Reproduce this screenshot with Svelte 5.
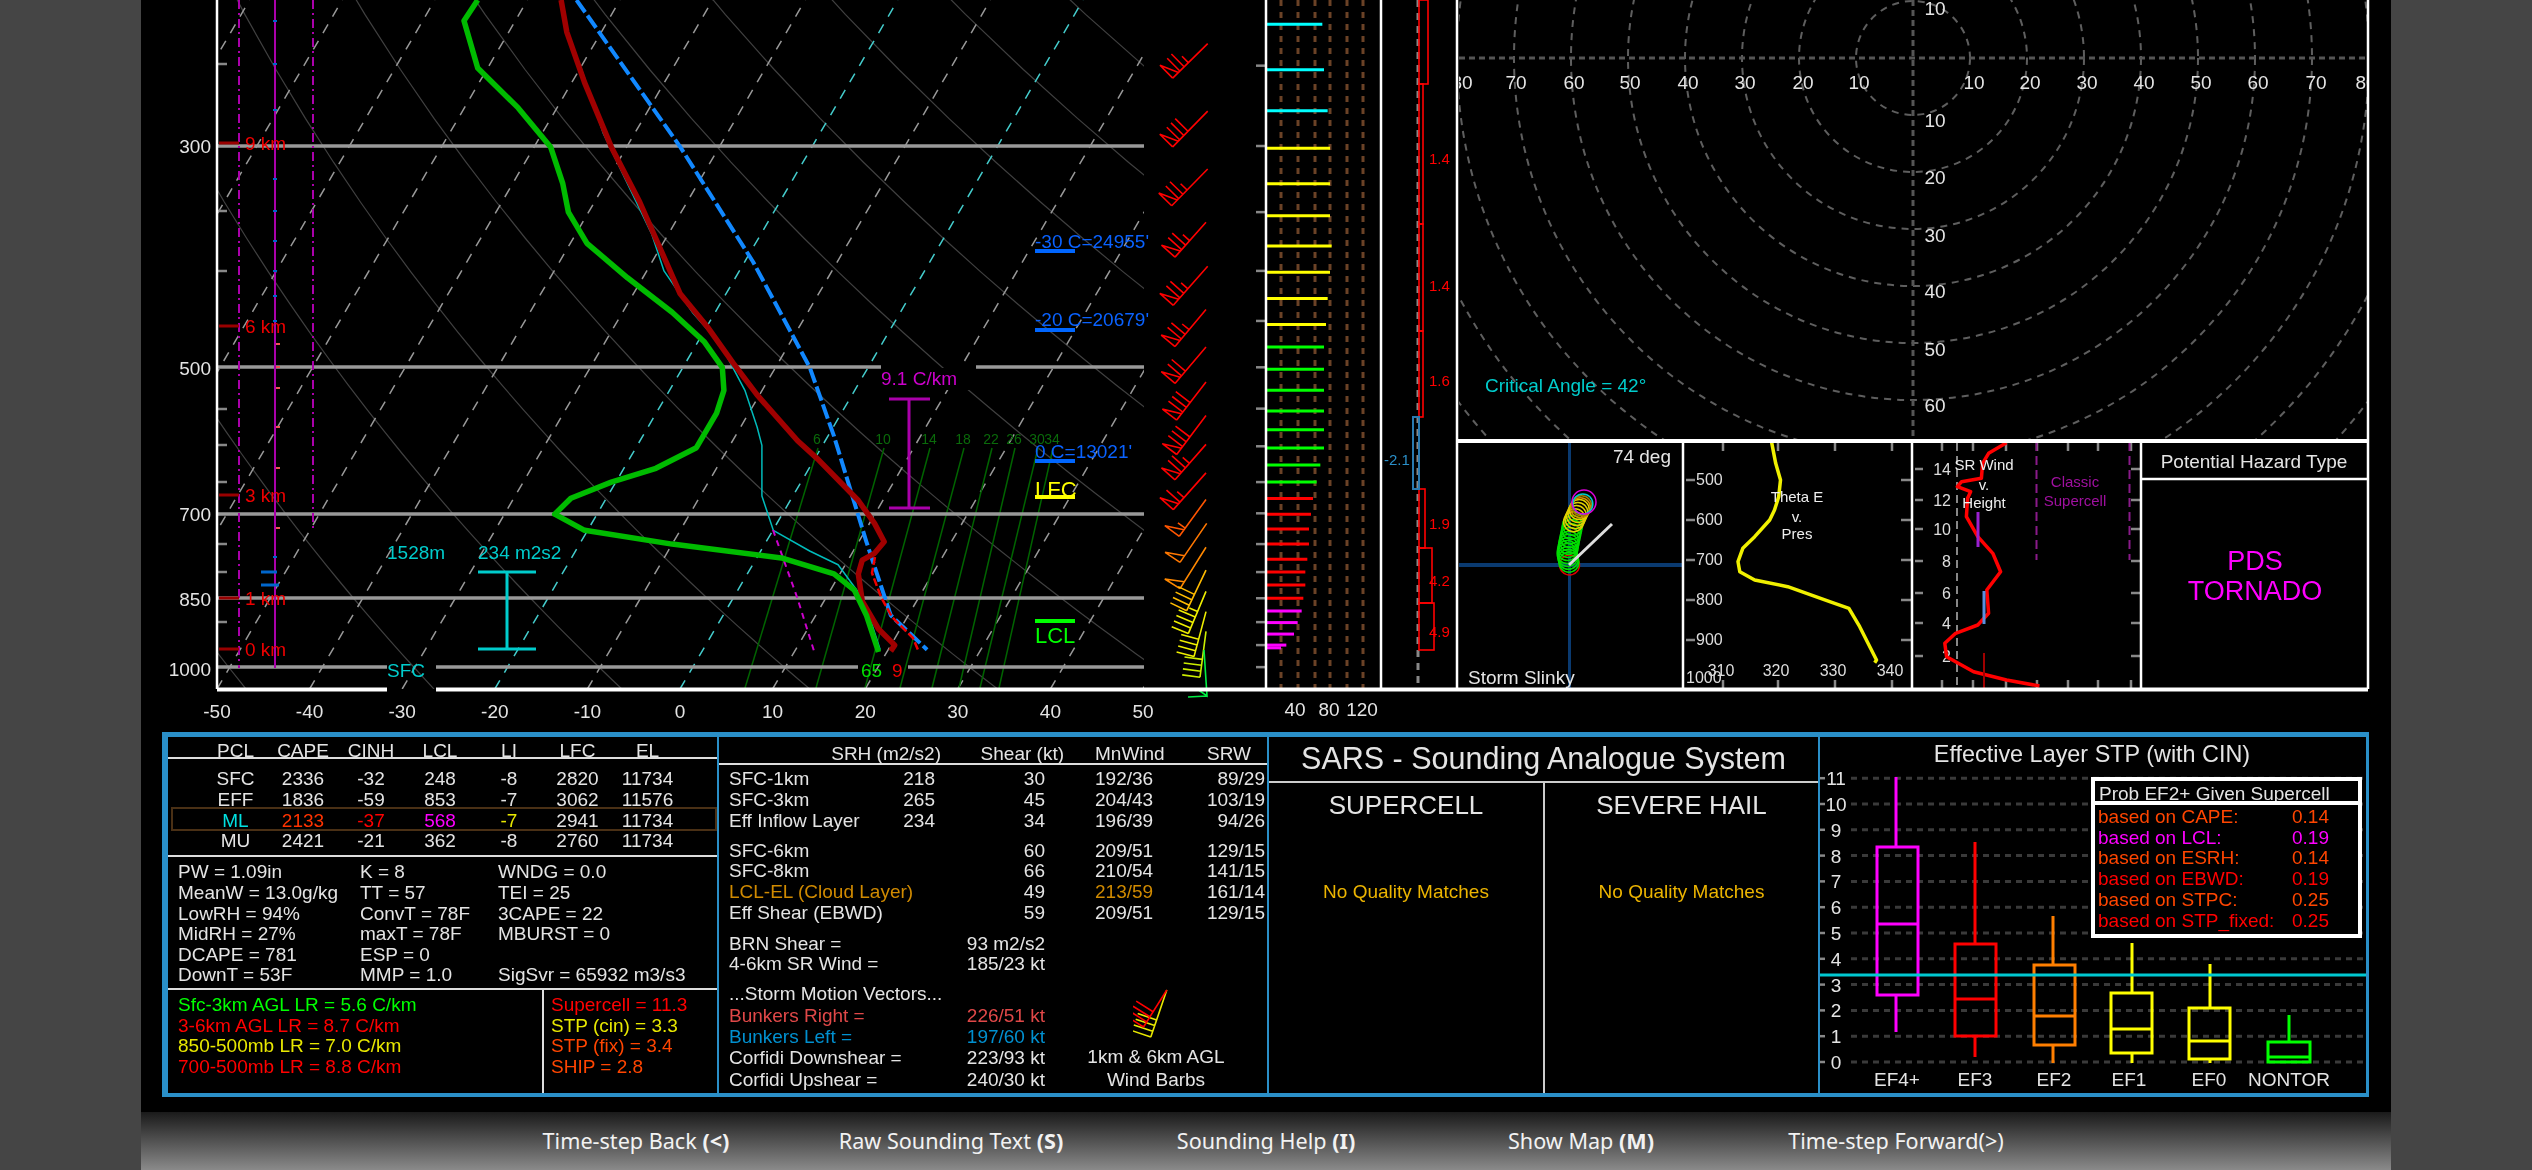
<script>
	// Traced points were read from crops of the sounding, so each crop gets its own scale
	const z1 = (x, y) => [x / 1.235, y / 2.178];
	const z7 = (x, y) => [1440 + x / 1.668, 430 + y / 3];
	const z9 = (x, y) => [1130 + x / 3, y / 2.178];
	const line = (pts, map) => pts.map(([x, y]) => map(x, y).map((v) => v.toFixed(1)).join(',')).join(' ');

	const yP = (p) => 667 - 431 * Math.log(1000 / p);
	const xT = (t, y) => 217 + (t + 50) * 9.26 + (689 - y) * 0.585;

	const isotherms = [];
	for (let t = -170; t <= 50; t += 10) isotherms.push({ t, x1: xT(t, 689), x2: xT(t, 0) });

	const adiabats = [];
	for (let theta = 203; theta <= 463; theta += 20) {
		const pts = [];
		for (let p = 1060; p >= 150; p -= 30) {
			const y = yP(p);
			pts.push(`${xT(theta * Math.pow(p / 1000, 0.286) - 273.15, y).toFixed(1)},${y.toFixed(1)}`);
		}
		adiabats.push(pts.join(' '));
	}

	const mixing = [
		[745, 818, '6'], [816, 884, '10'], [865, 930, '14'], [900, 964, '18'],
		[932, 992, '22'], [959, 1015, '26'], [980, 1038, '30'], [999, 1053, '34']
	];

	const temp = line([[693,0],[700,70],[722,180],[755,320],[790,440],[815,540],[840,640],[875,715],[905,790],[935,860],[985,960],[1010,1000],[1060,1090],[1080,1140],[1092,1180],[1080,1205],[1065,1220],[1060,1250],[1065,1310],[1085,1370],[1105,1405],[1100,1418]], z1);
	const dew = line([[590,0],[573,45],[590,148],[640,235],[680,320],[695,400],[702,462],[725,530],[775,605],[830,680],[870,745],[892,800],[894,850],[885,900],[860,975],[810,1020],[755,1050],[705,1085],[685,1120],[722,1155],[830,1185],[965,1215],[1030,1250],[1055,1285],[1070,1340],[1085,1420]], z1);
	const wetbulb = line([[693,0],[700,70],[718,150],[745,290],[775,400],[805,510],[820,590],[855,680],[890,750],[920,850],[935,930],[941,970],[941,1080],[955,1155],[1000,1200],[1035,1230],[1060,1290],[1075,1350],[1087,1415]], z1);
	const parcel = line([[712,0],[840,320],[930,570],[1000,800],[1030,950],[1070,1180],[1100,1340],[1145,1415]], z1);

	const isobars = [
		{ p: '300', y: 146, base: 153, segs: [[217, 1144]] },
		{ p: '500', y: 367, base: 375, segs: [[217, 881], [976, 1144]] },
		{ p: '700', y: 514, base: 521, segs: [[217, 1144]] },
		{ p: '850', y: 598, base: 606, segs: [[217, 1144]] },
		{ p: '1000', y: 667, base: 676, segs: [[217, 387], [436, 858], [908, 1144]] }
	];
	const heights = [
		{ label: '9 km', y: 143 }, { label: '6 km', y: 326 }, { label: '3 km', y: 495 },
		{ label: '1 km', y: 598 }, { label: '0 km', y: 649 }
	];
	const axisTicks = [64, 211, 271, 409, 445, 482, 544, 572, 622];
	const blueDots = [21, 64, 110, 179, 211, 241, 271, 296, 321, 557];
	const redDots = [344, 367, 388, 427, 468, 528];

	const xLabels = [-50, -40, -30, -20, -10, 0, 10, 20, 30, 40, 50];

	function barb(tip, base, color, flags, fulls, half, size = 18) {
		const len = Math.hypot(tip[0] - base[0], tip[1] - base[1]);
		const dx = (tip[0] - base[0]) / len;
		const dy = (tip[1] - base[1]) / len;
		const at = (s, l) => `${(base[0] + dx * s + dy * l).toFixed(1)},${(base[1] + dy * s - dx * l).toFixed(1)}`;
		let d = `M${at(0, 0)} L${tip[0].toFixed(1)},${tip[1].toFixed(1)}`;
		let s = 0;
		for (let i = 0; i < flags; i++) {
			d += ` M${at(s, 0)} L${at(s, size)} L${at(s + 8, 0)}`;
			s += 10;
		}
		for (let i = 0; i < fulls; i++) {
			d += ` M${at(s, 0)} L${at(s, size)}`;
			s += 6;
		}
		if (half) d += ` M${at(s, 0)} L${at(s, size / 2)}`;
		return { d, color };
	}

	const barbs = [
		[233,95,128,170,'#f00',1,2,1],[233,242,128,320,'#f00',1,3,0],[233,368,125,448,'#f00',1,2,1],
		[228,484,135,560,'#f00',1,2,1],[233,580,130,665,'#f00',1,2,1],[228,674,135,755,'#f00',1,2,1],
		[228,756,135,835,'#f00',1,2,0],[228,832,140,915,'#f00',1,3,0],[228,905,140,990,'#f00',1,3,0],
		[228,968,135,1045,'#f00',1,2,1],[228,1030,130,1110,'#f00',1,1,1],[228,1088,148,1168,'#f50',1,0,1],
		[230,1140,150,1225,'#f70',1,0,0],[228,1192,150,1282,'#f80',1,0,0],[228,1242,170,1330,'#fb0',0,4,0],
		[228,1288,175,1380,'#ee0',0,4,1],[228,1332,192,1430,'#ee0',0,4,0],[228,1375,210,1475,'#ce0',0,4,0]
	].map(([tx, ty, bx, by, c, f, b, h]) => barb(z9(tx, ty), z9(bx, by), c, f, b, h));

	const iconBarbs = [
		barb([1158.8, 988], [1142.8, 1035], '#e8e800', 0, 4, 0, 20),
		barb([1158.8, 988], [1135.5, 1025], '#f00', 0, 4, 0, 20)
	];

	const speedBars = [
		[53,577,'#0ff'],[152,582,'#0ff'],[241,593,'#0ff'],
		[323,600,'#ff0'],[400,600,'#ff0'],[470,600,'#ff0'],[536,605,'#ff0'],[593,600,'#ff0'],[650,593,'#ff0'],[707,588,'#ff0'],
		[756,582,'#0f0'],[804,582,'#0f0'],[850,582,'#0f0'],[895,582,'#0f0'],[936,582,'#0f0'],[976,582,'#0f0'],[1013,571,'#0f0'],[1050,560,'#0f0'],
		[1086,549,'#f00'],[1120,543,'#f00'],[1152,537,'#f00'],[1185,537,'#f00'],[1218,532,'#f00'],[1246,526,'#f00'],[1274,526,'#f00'],[1303,520,'#f00'],
		[1331,515,'#f0f'],[1356,503,'#f0f'],[1381,492,'#f0f'],[1405,469,'#f0f'],[1411,453,'#f0f']
	].map(([y, end, color]) => ({ y: y / 2.178, end: 1130 + end / 3, color }));
	const speedTicks = [143,318,462,590,699,800,890,972,1050,1118,1185,1246,1303,1355,1405,1453].map((y) => y / 2.178);
	const speedGrid = [1281, 1298, 1315, 1330, 1347, 1363];

	const shearBoxes = [
		[0, 84, 1428], [84, 224, 1423], [224, 331, 1423], [331, 417, 1423],
		[489, 548, 1425], [548, 603, 1432], [603, 650, 1434]
	];
	const shearLabels = [['1.4', 164], ['1.4', 291], ['1.6', 386], ['1.9', 529], ['4.2', 586], ['4.9', 637]];

	const hodoX = [[-80,1462],[-70,1516],[-60,1574],[-50,1630],[-40,1688],[-30,1745],[-20,1803],[-10,1859],[10,1974],[20,2030],[30,2087],[40,2144],[50,2201],[60,2258],[70,2316],[80,2366]];
	const hodoY = [[10,15],[10,127],[20,184],[30,242],[40,298],[50,356],[60,412]];
	const rings = Array.from({ length: 11 }, (_, i) => (i + 1) * 57);

	// storm slinky: circles walk up the updraft path
	const slinkyPath = [[1569.5,565],[1567,553],[1569.5,540],[1573,523],[1579,510],[1584,502]];
	const slinky = Array.from({ length: 22 }, (_, i) => {
		const f = (i / 21) * (slinkyPath.length - 1);
		const k = Math.min(Math.floor(f), slinkyPath.length - 2);
		const r = f - k;
		const color = i === 0 ? '#d00' : i < 13 ? '#0d0' : i < 18 ? '#e0d000' : i === 18 ? '#d09000' : i === 19 ? '#a08000' : i === 20 ? '#0cc' : '#d0d';
		return {
			x: slinkyPath[k][0] + (slinkyPath[k + 1][0] - slinkyPath[k][0]) * r,
			y: slinkyPath[k][1] + (slinkyPath[k + 1][1] - slinkyPath[k][1]) * r,
			r: i === 21 ? 12 : 10,
			color
		};
	});

	const thetaE = line([[553,35],[560,100],[568,150],[565,200],[558,240],[550,270],[525,320],[505,355],[497,395],[500,425],[525,450],[580,470],[650,515],[682,535],[700,590],[728,690],[725,698]], z7);
	const thetaP = [['500', 485], ['600', 525], ['700', 565], ['800', 605], ['900', 645]];
	const thetaT = [['310', 1721], ['320', 1776], ['330', 1833], ['340', 1890]];
	const srWind = line([[945,38],[915,70],[905,100],[903,145],[870,155],[863,170],[885,185],[880,205],[878,260],[897,320],[922,370],[935,425],[912,480],[915,550],[897,585],[860,610],[842,640],[845,680],[890,725],[945,750],[1000,768]], z7);
	const srH = [['14', 469], ['12', 500], ['10', 529], ['8', 561], ['6', 593], ['4', 623], ['2', 656]];
	const srTicks = [1942, 1973, 2006, 2037, 2068, 2098, 2131];

	const parcels = [
		{ name: 'SFC', cells: ['2336', '-32', '248', '-8', '2820', '11734'] },
		{ name: 'EFF', cells: ['1836', '-59', '853', '-7', '3062', '11576'] },
		{ name: 'ML', cells: ['2133', '-37', '568', '-7', '2941', '11734'], hot: true },
		{ name: 'MU', cells: ['2421', '-21', '362', '-8', '2760', '11734'] }
	];
	const indices = [
		['PW = 1.09in', 'K = 8', 'WNDG = 0.0'],
		['MeanW = 13.0g/kg', 'TT = 57', 'TEI = 25'],
		['LowRH = 94%', 'ConvT = 78F', '3CAPE = 22'],
		['MidRH = 27%', 'maxT = 78F', 'MBURST = 0'],
		['DCAPE = 781', 'ESP = 0', ''],
		['DownT = 53F', 'MMP = 1.0', 'SigSvr = 65932 m3/s3']
	];

	const stpBoxes = [
		{ name: 'EF4+', lx: 1897, x: 1896, x1: 1877, x2: 1918, top: 777, bot: 1032, y1: 847, y2: 995, med: 924, color: '#f0f' },
		{ name: 'EF3', lx: 1975, x: 1975, x1: 1955, x2: 1996, top: 842, bot: 1057, y1: 944, y2: 1036, med: 999, color: '#f00' },
		{ name: 'EF2', lx: 2054, x: 2053, x1: 2034, x2: 2075, top: 916, bot: 1063, y1: 965, y2: 1045, med: 1016, color: '#ff7f00' },
		{ name: 'EF1', lx: 2129, x: 2132, x1: 2111, x2: 2152, top: 943, bot: 1063, y1: 993, y2: 1053, med: 1029, color: '#ff0' },
		{ name: 'EF0', lx: 2209, x: 2210, x1: 2189, x2: 2230, top: 964, bot: 1063, y1: 1008, y2: 1059, med: 1041, color: '#ff0' },
		{ name: 'NONTOR', lx: 2289, x: 2289, x1: 2268, x2: 2310, top: 1015, bot: 1062, y1: 1042, y2: 1062, med: 1057, color: '#0f0' }
	];
	const stpRows = [
		['based on CAPE:', '0.14', '#ff4500'], ['based on LCL:', '0.19', '#f0f'], ['based on ESRH:', '0.14', '#ff4500'],
		['based on EBWD:', '0.19', '#f00'], ['based on STPC:', '0.25', '#ff4500'], ['based on STP_fixed:', '0.25', '#f00']
	];

	const footer = [
		['Time-step Back ', '(<)'], ['Raw Sounding Text ', '(S)'], ['Sounding Help ', '(I)'],
		['Show Map ', '(M)'], ['Time-step Forward(>)', '']
	];
</script>

<div class="page">
	<div class="side"></div>
	<main class="sheet">
		<svg class="chart" viewBox="141 0 2250 732" width="2250" height="732">
			<defs>
				<clipPath id="skew"><rect x="217" y="0" width="927" height="689" /></clipPath>
				<clipPath id="hodo"><rect x="1459" y="0" width="908" height="440" /></clipPath>
			</defs>

			<!-- skew-T background -->
			<g clip-path="url(#skew)">
				{#each adiabats as pts}
					<polyline points={pts} class="adiabat" />
				{/each}
				{#each isotherms as iso}
					<line x1={iso.x1} y1="689" x2={iso.x2} y2="0" class="isotherm" class:frz={iso.t === 0 || iso.t === -20} />
				{/each}
			</g>
			<rect x="881" y="368" width="95" height="22" fill="#000" />
			{#each mixing as [x1, x2, label]}
				<line {x1} y1="688" {x2} y2="448" class="mixing" />
				<text x={x2 - 1} y="444" class="tiny mixlabel" text-anchor="middle">{label}</text>
			{/each}
			{#each isobars as bar}
				{#each bar.segs as [x1, x2]}
					<line {x1} y1={bar.y} {x2} y2={bar.y} class="isobar" />
				{/each}
				<text x="211" y={bar.base} class="lbl" text-anchor="end">{bar.p}</text>
			{/each}

			<!-- left strip -->
			<line x1="275" y1="0" x2="275" y2="668" class="pw" />
			<line x1="239" y1="0" x2="239" y2="668" class="pw dashdot" />
			<line x1="313" y1="0" x2="313" y2="532" class="pw dashdot" />
			{#each blueDots as y}
				<line x1="273" y1={y} x2="277" y2={y} stroke="#06c" stroke-width="2" />
			{/each}
			{#each redDots as y}
				<line x1="276" y1={y} x2="280" y2={y} stroke="#e55" stroke-width="2" />
			{/each}
			<line x1="261" y1="572" x2="277" y2="572" stroke="#06c" stroke-width="3" />
			<line x1="261" y1="585" x2="279" y2="585" stroke="#06c" stroke-width="3" />
			{#each axisTicks as y}
				<line x1="218" y1={y} x2="227" y2={y} class="tick" />
			{/each}
			{#each heights as h}
				<line x1="219" y1={h.y} x2="239" y2={h.y} stroke="#900" stroke-width="3" />
				<text x="245" y={h.y + 7} class="lbl" fill="#e00">{h.label}</text>
			{/each}

			<!-- traces -->
			<polyline points={wetbulb} class="trace" stroke="#0bb" stroke-width="1.5" />
			<polyline points="773,530 797,597 814,651" class="trace" stroke="#c0c" stroke-width="2" stroke-dasharray="6 5" />
			<polyline points={parcel} class="trace" stroke="#18f" stroke-width="4" stroke-dasharray="15 4" />
			<polyline points="875,557 872,573 881,597 892,617 913,638 918,650" class="trace" stroke="#e00" stroke-width="2.5" stroke-dasharray="8 3" />
			<polyline points={temp} class="trace" stroke="#a00000" stroke-width="5.5" />
			<polyline points={dew} class="trace" stroke="#0b0" stroke-width="5.5" />

			<!-- annotations -->
			<text x="881" y="385" class="lbl" fill="#c0c">9.1 C/km</text>
			<path d="M889 399H930M909 399V508M889 508H930" class="ibar" stroke="#a0a" />
			<text x="387" y="559" class="lbl" fill="#0cc">1528m</text>
			<text x="478" y="559" class="lbl" fill="#0cc">234 m2s2</text>
			<path d="M478 572H536M507 572V649M478 649H536" class="ibar" stroke="#0cc" />
			<text x="387" y="677" class="lbl" fill="#0cc">SFC</text>
			<text x="861" y="677" class="lbl" fill="#0d0">65</text>
			<text x="892" y="677" class="lbl" fill="#e00">9</text>

			<text x="1035" y="248" class="lbl" fill="#0a62ff">-30 C=24955'</text>
			<rect x="1035" y="249" width="40" height="4" fill="#06f" />
			<text x="1035" y="326" class="lbl" fill="#0a62ff">-20 C=20679'</text>
			<rect x="1035" y="328" width="40" height="4" fill="#06f" />
			<text x="1035" y="458" class="lbl" fill="#0a62ff">0 C=13021'</text>
			<rect x="1035" y="459" width="40" height="4" fill="#06f" />
			<text x="1035" y="497" class="big" fill="#ff0">LFC</text>
			<rect x="1035" y="495" width="40" height="4" fill="#ff0" />
			<rect x="1035" y="619" width="40" height="4" fill="#0f0" />
			<text x="1035" y="643" class="big" fill="#0f0">LCL</text>

			<!-- wind barbs -->
			{#each barbs as b}
				<path d={b.d} class="barb" stroke={b.color} />
			{/each}
			<path d="M1204 650L1207 696L1197 689M1207 696L1188 697" class="barb" stroke="#0e4" />

			<!-- wind speed strip -->
			{#each speedGrid as x}
				<line x1={x} y1="0" x2={x} y2="689" class="speedgrid" />
			{/each}
			{#each speedTicks as y}
				<line x1="1256" y1={y} x2="1265" y2={y} class="tick" />
			{/each}
			{#each speedBars as bar}
				<line x1="1267" y1={bar.y} x2={bar.end} y2={bar.y} stroke={bar.color} stroke-width="3" />
			{/each}
			<text x="1295" y="716" class="lbl" text-anchor="middle">40</text>
			<text x="1329" y="716" class="lbl" text-anchor="middle">80</text>
			<text x="1362" y="716" class="lbl" text-anchor="middle">120</text>

			<!-- inferred temperature advection strip -->
			<line x1="1418" y1="0" x2="1418" y2="689" class="advect" />
			{#each shearBoxes as [y1, y2, x2]}
				<rect x="1419" y={y1} width={x2 - 1419} height={y2 - y1} class="redbox" />
			{/each}
			<rect x="1413" y="417" width="6" height="72" fill="none" stroke="#2a7ab0" stroke-width="2" />
			<text x="1384" y="465" class="small" fill="#2a8fc8">-2.1</text>
			{#each shearLabels as [label, y]}
				<text x="1429" {y} class="small" fill="#f00">{label}</text>
			{/each}

			<!-- hodograph -->
			<g clip-path="url(#hodo)">
				{#each rings as r}
					<circle cx="1913" cy="58" {r} class="ring" />
				{/each}
				<line x1="1459" y1="58" x2="2367" y2="58" class="hodoaxis" />
				<line x1="1913" y1="0" x2="1913" y2="440" class="hodoaxis" />
				{#each hodoX as [label, x]}
					<text {x} y="89" class="lbl" text-anchor="middle">{Math.abs(label)}</text>
				{/each}
			</g>
			{#each hodoY as [label, y]}
				<text x="1935" {y} class="lbl" text-anchor="middle">{label}</text>
			{/each}
			<text x="1485" y="392" class="lbl" fill="#0cc">Critical Angle = 42°</text>

			<!-- storm slinky -->
			<line x1="1459" y1="565" x2="1682" y2="565" stroke="#0a3a70" stroke-width="4" />
			<line x1="1569.5" y1="442" x2="1569.5" y2="688" stroke="#0a3a70" stroke-width="3" />
			{#each slinky as ring}
				<circle cx={ring.x} cy={ring.y} r={ring.r} fill="none" stroke={ring.color} stroke-width="1.5" />
			{/each}
			<line x1="1569" y1="565" x2="1612" y2="524" stroke="#ddd" stroke-width="3" />
			<text x="1671" y="463" class="lbl" text-anchor="end">74 deg</text>
			<text x="1468" y="684" class="lbl">Storm Slinky</text>

			<!-- theta-e -->
			{#each thetaP as [label, y]}
				<line x1="1686" y1={y - 5} x2="1695" y2={y - 5} class="tick" />
				<line x1="1901" y1={y - 5} x2="1911" y2={y - 5} class="tick" />
				<text x="1696" {y} class="small16">{label}</text>
			{/each}
			<text x="1686" y="683" class="small16">1000</text>
			{#each thetaT as [label, x]}
				<line x1={x + 2} y1="443" x2={x + 2} y2="451" class="tick" />
				<line x1={x + 2} y1="680" x2={x + 2} y2="688" class="tick" />
				<text {x} y="676" class="small16" text-anchor="middle">{label}</text>
			{/each}
			<polyline points={thetaE} class="trace" stroke="#f0f000" stroke-width="3.5" />
			<text x="1797" y="502" class="small light" text-anchor="middle">Theta E</text>
			<text x="1797" y="522" class="small light" text-anchor="middle">v.</text>
			<text x="1797" y="539" class="small light" text-anchor="middle">Pres</text>

			<!-- SR wind v height -->
			{#each srH as [label, y]}
				<line x1="1915" y1={y} x2="1923" y2={y} class="tick" />
				<line x1="2131" y1={y} x2="2140" y2={y} class="tick" />
				<text x="1951" y={y + 6} class="small16" text-anchor="end">{label}</text>
			{/each}
			{#each srTicks as x}
				<line x1={x} y1="443" x2={x} y2="451" class="tick" />
				<line x1={x} y1="680" x2={x} y2="688" class="tick" />
			{/each}
			<line x1="1957" y1="443" x2="1957" y2="688" stroke="#888" stroke-width="2" stroke-dasharray="8 5" />
			<line x1="2036.5" y1="442" x2="2036.5" y2="560" stroke="#8a1a8a" stroke-width="2" stroke-dasharray="9 5" />
			<line x1="2129.5" y1="442" x2="2129.5" y2="560" stroke="#8a1a8a" stroke-width="2" stroke-dasharray="9 5" />
			<polyline points={srWind} class="trace" stroke="#f00" stroke-width="3.5" />
			<line x1="1978" y1="512" x2="1978" y2="547" stroke="#9a20d0" stroke-width="3" />
			<line x1="1984" y1="591" x2="1984" y2="624" stroke="#5a90e0" stroke-width="3" />
			<line x1="1984" y1="653" x2="1984" y2="688" stroke="#a00000" stroke-width="2" />
			<text x="1984" y="470" class="small light" text-anchor="middle">SR Wind</text>
			<text x="1984" y="490" class="small light" text-anchor="middle">v.</text>
			<text x="1984" y="508" class="small light" text-anchor="middle">Height</text>
			<text x="2075" y="487" class="small" fill="#a010a0" text-anchor="middle">Classic</text>
			<text x="2075" y="506" class="small" fill="#a010a0" text-anchor="middle">Supercell</text>

			<!-- hazard type -->
			<text x="2254" y="468" class="lbl" text-anchor="middle">Potential Hazard Type</text>
			<text x="2255" y="570" class="hazard" text-anchor="middle">PDS</text>
			<text x="2255" y="600" class="hazard" text-anchor="middle">TORNADO</text>

			<!-- frame -->
			<path d="M217 0V689M1266 0V689" class="frame thin" />
			<path d="M1381 0V689M1457 0V689M2368 0V689M1683 441V689M1912 441V689M2141 441V689" class="frame thin" />
			<path d="M2141 479H2368" class="frame thin" />
			<path d="M1457 441H2368M217 689.5H387M436 689.5H2368" class="frame" />

			{#each xLabels as t}
				<text x={217 + (t + 50) * 9.26} y="718" class="lbl" text-anchor="middle">{t}</text>
			{/each}
		</svg>

		<section class="panel">
			<!-- thermodynamic indices -->
			<div class="col thermo">
				<div class="pcl-row pcl-head">
					<span>PCL</span><span>CAPE</span><span>CINH</span><span>LCL</span><span>LI</span><span>LFC</span><span>EL</span>
				</div>
				<div class="pcl-body">
					{#each parcels as row}
						<div class="pcl-row" class:hot={row.hot}>
							<span class="name">{row.name}</span>
							{#each row.cells as cell, i}
								<span class={row.hot ? `hot${i}` : ''}>{cell}</span>
							{/each}
						</div>
					{/each}
				</div>
				<div class="indices">
					{#each indices as row}
						{#each row as cell}
							<span>{cell}</span>
						{/each}
					{/each}
				</div>
				<div class="rates">
					<div class="rates-left">
						<div class="green">Sfc-3km AGL LR = 5.6 C/km</div>
						<div class="red">3-6km AGL LR = 8.7 C/km</div>
						<div class="yellow">850-500mb LR = 7.0 C/km</div>
						<div class="red">700-500mb LR = 8.8 C/km</div>
					</div>
					<div class="rates-right">
						<div class="red">Supercell = 11.3</div>
						<div class="yellow">STP (cin) = 3.3</div>
						<div class="orange">STP (fix) = 3.4</div>
						<div class="orange">SHIP = 2.8</div>
					</div>
				</div>
			</div>

			<!-- kinematics -->
			<div class="col kine">
				<div class="kine-head">
					<span>SRH (m2/s2)</span><span>Shear (kt)</span><span class="mn">MnWind</span><span>SRW</span>
				</div>
				<div class="kine-group first">
					<span>SFC-1km</span><span>218</span><span>30</span><span>192/36</span><span>89/29</span>
					<span>SFC-3km</span><span>265</span><span>45</span><span>204/43</span><span>103/19</span>
					<span>Eff Inflow Layer</span><span>234</span><span>34</span><span>196/39</span><span>94/26</span>
				</div>
				<div class="kine-group">
					<span>SFC-6km</span><span></span><span>60</span><span>209/51</span><span>129/15</span>
					<span>SFC-8km</span><span></span><span>66</span><span>210/54</span><span>141/15</span>
					<span class="amber">LCL-EL (Cloud Layer)</span><span></span><span>49</span><span class="amber">213/59</span><span>161/14</span>
					<span>Eff Shear (EBWD)</span><span></span><span>59</span><span>209/51</span><span>129/15</span>
				</div>
				<div class="pairs brn">
					<span>BRN Shear =</span><span class="val">93 m2/s2</span>
					<span>4-6km SR Wind =</span><span class="val">185/23 kt</span>
				</div>
				<div class="motion">
					<div class="pairs">
						<span class="wide">...Storm Motion Vectors...</span>
						<span class="bright">Bunkers Right =</span><span class="val bright">226/51 kt</span>
						<span class="bleft">Bunkers Left =</span><span class="val bleft">197/60 kt</span>
						<span>Corfidi Downshear =</span><span class="val">223/93 kt</span>
						<span>Corfidi Upshear =</span><span class="val">240/30 kt</span>
					</div>
					<div class="barb-key">
						<svg viewBox="1125 985 46 52" width="46" height="52">
							{#each iconBarbs as b}
								<path d={b.d} class="barb" stroke={b.color} />
							{/each}
						</svg>
						<span>1km &amp; 6km AGL</span>
						<span>Wind Barbs</span>
					</div>
				</div>
			</div>

			<!-- analogues -->
			<div class="col sars">
				<h2>SARS - Sounding Analogue System</h2>
				<div class="sars-cols">
					<div>
						<h3>SUPERCELL</h3>
						<p>No Quality Matches</p>
					</div>
					<div>
						<h3>SEVERE HAIL</h3>
						<p>No Quality Matches</p>
					</div>
				</div>
			</div>

			<!-- STP box and whisker -->
			<div class="col stp">
				<svg viewBox="1820 737 546 356" width="546" height="356">
					<text x="2092" y="762" class="stp-title" text-anchor="middle">Effective Layer STP (with CIN)</text>
					{#each Array(12) as _, i}
						<line x1="1851" y1={1062 - i * 25.8} x2="2365" y2={1062 - i * 25.8} class="stp-grid" />
						<line x1="1820" y1={1062 - i * 25.8} x2="1825" y2={1062 - i * 25.8} class="tick" />
						<text x="1836" y={1069 - i * 25.8} class="lbl" text-anchor="middle">{i}</text>
					{/each}
					{#each stpBoxes as b}
						<line x1={b.x} y1={b.top} x2={b.x} y2={b.y1} stroke={b.color} stroke-width="3" />
						<line x1={b.x} y1={b.y2} x2={b.x} y2={Math.max(b.bot, b.y2)} stroke={b.color} stroke-width="3" />
						<rect x={b.x1} y={b.y1} width={b.x2 - b.x1} height={b.y2 - b.y1} fill="none" stroke={b.color} stroke-width="3" />
						<line x1={b.x1} y1={b.med} x2={b.x2} y2={b.med} stroke={b.color} stroke-width="3" />
						<text x={b.lx} y="1086" class="lbl" text-anchor="middle">{b.name}</text>
					{/each}
					<line x1="1820" y1="975" x2="2366" y2="975" stroke="#00c8d0" stroke-width="3" />
					<rect x="2093" y="779" width="267" height="157" fill="#000" stroke="#fff" stroke-width="4" />
					<text x="2099" y="800" class="lbl">Prob EF2+ Given Supercell</text>
					<rect x="2095" y="803" width="263" height="7" fill="#000" />
					<line x1="2091" y1="803" x2="2361" y2="803" stroke="#fff" stroke-width="4" />
					{#each stpRows as [label, value, color], i}
						<text x="2098" y={823 + i * 20.7} class="lbl" fill={color}>{label}</text>
						<text x="2292" y={823 + i * 20.7} class="lbl" fill={color}>{value}</text>
					{/each}
				</svg>
			</div>
		</section>

		<nav class="footer">
			{#each footer as [label, key]}
				<span>{label}<b>{key}</b></span>
			{/each}
		</nav>
	</main>
	<div class="side"></div>
</div>

<style>
	:global(body) {
		background: #454545;
	}

	.page {
		display: flex;
		width: 2532px;
		height: 1170px;
		overflow: hidden;
	}

	.side {
		flex: 0 0 141px;
		background: #454545;
	}

	.sheet {
		flex: 1;
		display: flex;
		flex-direction: column;
		background: #000;
		font-family: 'Liberation Sans', Arial, sans-serif;
		font-size: 19px;
		line-height: 20.6px;
		color: #e4e4e4;
	}

	.chart {
		display: block;
	}

	/* the source is an upscaled raster, so everything sits a little soft */
	.chart,
	.panel {
		filter: blur(0.6px);
	}

	svg text {
		font-family: 'Liberation Sans', Arial, sans-serif;
	}

	.lbl {
		font-size: 19px;
	}

	.lbl:not([fill]) {
		fill: #e4e4e4;
	}

	.tiny {
		font-size: 14px;
	}

	.mixlabel {
		fill: #0a6a0a;
	}

	.small {
		font-size: 15px;
	}

	.small16 {
		font-size: 16px;
		fill: #ddd;
	}

	.light {
		fill: #eee;
	}

	.big {
		font-size: 22px;
	}

	.hazard {
		font-size: 27px;
		fill: #f0f;
	}

	.adiabat {
		fill: none;
		stroke: #404040;
		stroke-width: 1.2;
	}

	.isotherm {
		stroke: #999;
		stroke-width: 1.5;
		stroke-dasharray: 10 9;
	}

	.isotherm.frz {
		stroke: #4cc;
	}

	.mixing {
		stroke: #006400;
		stroke-width: 1.5;
	}

	.isobar {
		stroke: #999;
		stroke-width: 3.5;
	}

	.pw {
		stroke: #a0a;
		stroke-width: 2;
	}

	.dashdot {
		stroke-dasharray: 9 4 2 4;
	}

	.tick {
		stroke: #888;
		stroke-width: 2.5;
	}

	.trace {
		fill: none;
		stroke-linejoin: round;
	}

	.ibar {
		fill: none;
		stroke-width: 3;
	}

	.barb {
		fill: none;
		stroke-width: 1.6;
	}

	.speedgrid {
		stroke: #6b4226;
		stroke-width: 3;
		stroke-dasharray: 6 6;
	}

	.advect {
		stroke: #888;
		stroke-width: 3;
		stroke-dasharray: 7 6;
	}

	.redbox {
		fill: none;
		stroke: #f00;
		stroke-width: 1.6;
	}

	.ring {
		fill: none;
		stroke: #5e5e5e;
		stroke-width: 2;
		stroke-dasharray: 7 6;
	}

	.hodoaxis {
		stroke: #555;
		stroke-width: 3;
		stroke-dasharray: 6 4;
	}

	.frame {
		fill: none;
		stroke: #fff;
		stroke-width: 4;
	}

	.frame.thin {
		stroke-width: 2.5;
	}

	/* lower table block */
	.panel {
		display: grid;
		grid-template-columns: 549px 548px 549px 546px;
		gap: 2px;
		box-sizing: border-box;
		width: 2207px;
		height: 365px;
		margin-left: 21px;
		border: solid #2a8fc8;
		border-width: 5px 3px 4px 6px;
		background: #2a8fc8;
	}

	.col {
		background: #000;
		min-width: 0;
		display: flex;
		flex-direction: column;
	}

	.pcl-row {
		display: grid;
		grid-template-columns: 67px 68px 68px 70px 68px 69px 71px;
		padding-left: 34px;
		text-align: center;
		position: relative;
	}

	.pcl-head {
		box-sizing: border-box;
		height: 22px;
		line-height: 27px;
		border-bottom: 2px solid #ddd;
	}

	.pcl-body {
		box-sizing: border-box;
		height: 96px;
		padding-top: 10.4px;
	}

	.pcl-row.hot::before {
		content: '';
		position: absolute;
		top: -4px;
		bottom: 0;
		left: 3px;
		right: 0;
		border: 2px solid #4a3015;
	}

	.hot .name {
		color: #00e0e0;
	}

	.hot0 {
		color: #ff3300;
	}

	.hot1 {
		color: #f00;
	}

	.hot2 {
		color: #f0f;
	}

	.hot3 {
		color: #e8e800;
	}

	.indices {
		box-sizing: border-box;
		height: 133px;
		padding: 5.4px 0 0 10px;
		display: grid;
		grid-template-columns: 182px 138px 1fr;
		align-content: start;
		border-top: 2px solid #ddd;
	}

	.rates {
		flex: 1;
		display: flex;
		border-top: 2px solid #ddd;
	}

	.rates-left {
		box-sizing: border-box;
		width: 376px;
		padding: 5px 0 0 10px;
		border-right: 2px solid #ddd;
	}

	.rates-right {
		padding: 5px 0 0 7px;
	}

	.green {
		color: #0f0;
	}

	.red {
		color: #f00;
	}

	.yellow {
		color: #e8e800;
	}

	.orange {
		color: #ff4500;
	}

	.kine-head {
		box-sizing: border-box;
		height: 28px;
		padding: 7px 0 0 10px;
		display: grid;
		grid-template-columns: 212px 123px 31px 156px;
		border-bottom: 2px solid #ddd;
	}

	.kine-head span {
		text-align: right;
	}

	.kine-head .mn {
		grid-column: 3;
		text-align: left;
		margin-left: 31px;
		white-space: nowrap;
	}

	.kine-group {
		display: grid;
		grid-template-columns: 151px 55px 110px 135px 85px;
		padding-left: 10px;
		margin-top: 9.6px;
	}

	.kine-group.first {
		margin-top: 4.4px;
	}

	.kine-group span {
		white-space: nowrap;
	}

	.kine-group span:nth-child(5n + 2),
	.kine-group span:nth-child(5n + 3),
	.kine-group span:nth-child(5n + 5) {
		text-align: right;
	}

	.kine-group span:nth-child(5n + 4) {
		padding-left: 50px;
	}

	.amber {
		color: #d08a00;
	}

	.pairs {
		display: grid;
		grid-template-columns: 206px 110px;
		padding-left: 10px;
	}

	.pairs span {
		white-space: nowrap;
	}

	.pairs .val {
		text-align: right;
	}

	.pairs .wide {
		grid-column: 1 / span 2;
	}

	.pairs.brn {
		margin-top: 10.4px;
	}

	.motion {
		display: flex;
		margin-top: 9.4px;
	}

	.pairs .bright {
		color: #e04848;
	}

	.pairs .bleft {
		color: #0090d0;
	}

	.barb-key {
		flex: 1;
		display: flex;
		flex-direction: column;
		align-items: center;
		line-height: 23px;
	}

	.barb-key svg {
		margin: 3px 0 6px;
		display: block;
	}

	.sars h2 {
		box-sizing: border-box;
		height: 46px;
		margin: 0;
		font-size: 30.5px;
		font-weight: normal;
		line-height: 43px;
		text-align: center;
		white-space: nowrap;
		border-bottom: 2px solid #ccc;
	}

	.sars-cols {
		flex: 1;
		display: grid;
		grid-template-columns: 274px 1fr;
	}

	.sars-cols > div + div {
		border-left: 2px solid #ccc;
	}

	.sars-cols > div {
		text-align: center;
	}

	.sars h3 {
		margin: 0;
		font-size: 26px;
		font-weight: normal;
		line-height: 44px;
	}

	.sars p {
		margin: 54.5px 0 0;
		color: #ecb400;
	}

	.stp svg {
		display: block;
	}

	.stp-title {
		font-size: 23.4px;
		fill: #e4e4e4;
	}

	.stp-grid {
		stroke: #3a3a3a;
		stroke-width: 3;
		stroke-dasharray: 6 5;
	}

	.footer {
		display: flex;
		justify-content: center;
		height: 58px;
		margin-top: 15px;
		background: linear-gradient(#1a1a1a, #8a8a8a);
		font-family: 'Noto Sans', sans-serif;
		font-size: 21.6px;
		line-height: 58px;
		color: #f2f2f2;
	}

	.footer span {
		width: 315px;
		text-align: center;
	}
</style>
